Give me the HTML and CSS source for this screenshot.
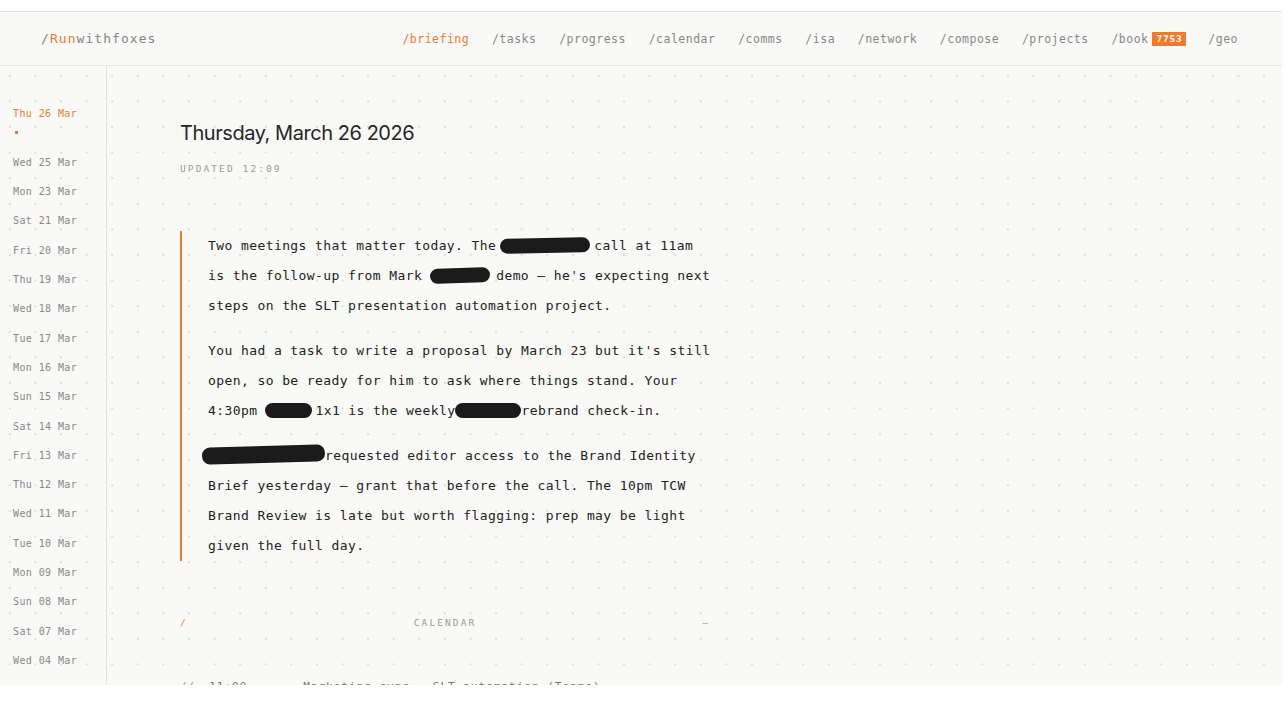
FILE: index.html
```html
<!DOCTYPE html>
<html lang="en">
<head>
  <meta charset="UTF-8">
  <meta name="viewport" content="width=device-width, initial-scale=1.0">
  <title>Runwithfoxes — briefing</title>
  <link rel="stylesheet" href="styles.css">
</head>

<body>
  <div class="app">
    <!-- Barra superiore -->
    <header class="topbar">
      <div class="logo">/<span class="accent">Run</span>withfoxes</div>
      <nav class="nav">
        <a class="active" href="#">/briefing</a>
        <a href="#">/tasks</a>
        <a href="#">/progress</a>
        <a href="#">/calendar</a>
        <a href="#">/comms</a>
        <a href="#">/isa</a>
        <a href="#">/network</a>
        <a href="#">/compose</a>
        <a href="#">/projects</a>
        <a href="#">/book <span class="badge">7753</span></a>
        <a href="#">/geo</a>
      </nav>
    </header>

    <div class="layout">
      <!-- Archivio dei briefing -->
      <aside class="sidebar">
        <ul class="days">
          <li class="day active">Thu 26 Mar</li>
          <li class="day">Wed 25 Mar</li>
          <li class="day">Mon 23 Mar</li>
          <li class="day">Sat 21 Mar</li>
          <li class="day">Fri 20 Mar</li>
          <li class="day">Thu 19 Mar</li>
          <li class="day">Wed 18 Mar</li>
          <li class="day">Tue 17 Mar</li>
          <li class="day">Mon 16 Mar</li>
          <li class="day">Sun 15 Mar</li>
          <li class="day">Sat 14 Mar</li>
          <li class="day">Fri 13 Mar</li>
          <li class="day">Thu 12 Mar</li>
          <li class="day">Wed 11 Mar</li>
          <li class="day">Tue 10 Mar</li>
          <li class="day">Mon 09 Mar</li>
          <li class="day">Sun 08 Mar</li>
          <li class="day">Sat 07 Mar</li>
          <li class="day">Wed 04 Mar</li>
        </ul>
      </aside>

      <!-- Briefing del giorno -->
      <main class="briefing">
        <h1 class="date-title">Thursday, March 26 2026</h1>
        <div class="updated">UPDATED 12:09</div>

        <blockquote class="summary">
          <p>Two meetings that matter today. The<span class="redact r1"></span>call at 11am is the follow-up from Mark<span class="redact r2"></span>demo — he's expecting next steps on the SLT presentation automation project.</p>
          <p>You had a task to write a proposal by March 23 but it's still open, so be ready for him to ask where things stand. Your 4:30pm<span class="redact r3"></span>1x1 is the weekly<span class="redact r4"></span>rebrand check-in.</p>
          <p><span class="redact r5"></span>requested editor access to the Brand Identity Brief yesterday — grant that before the call. The 10pm TCW Brand Review is late but worth flagging: prep may be light given the full day.</p>
        </blockquote>

        <div class="section-head">
          <span class="slash">/</span>
          <span class="section-title">CALENDAR</span>
          <span class="toggle">–</span>
        </div>

        <ul class="events">
          <li class="event"><span class="slash">//</span><span class="time">11:00</span><span class="what">Marketing sync — SLT automation (Teams)</span></li>
        </ul>
      </main>
    </div>
  </div>
</body>
</html>
```

FILE: styles.css
```css
/* Stile generale */
body {
  margin: 0;
  background-color: #fff;
  font-family: "DejaVu Sans Mono", "Liberation Mono", monospace;
  color: #222;
}

.app {
  width: 1282px;
  height: 673px;
  margin-top: 11px;
  border-top: 1px solid #e4e4e0;
  background-color: #f9f9f7;
  display: flex;
  flex-direction: column;
  overflow: hidden;
}

/* Barra superiore */
.topbar {
  height: 53px;
  flex-shrink: 0;
  border-bottom: 1px solid #e6e6e2;
  display: flex;
  align-items: center;
  justify-content: space-between;
  padding: 0 44px 0 41px;
}

.logo {
  font-size: 13px;
  letter-spacing: 1.05px;
  color: #858585;
}

.accent {
  color: #f07b2c;
}

.nav {
  display: flex;
  align-items: center;
  gap: 22.7px;
}

.nav a {
  font-size: 11.5px;
  letter-spacing: 0.5px;
  color: #888;
  text-decoration: none;
  display: flex;
  align-items: center;
}

.nav a.active {
  color: #f07b2c;
}

.badge {
  background-color: #f07b2c;
  color: #fff;
  font-size: 9.5px;
  font-weight: bold;
  letter-spacing: 0.8px;
  padding: 1px 3px 1px 5px;
  margin-left: 3px;
  line-height: 12px;
}

/* Area con griglia a punti */
.layout {
  flex: 1;
  display: flex;
  min-height: 0;
  background-image: radial-gradient(circle, #deded9 0.9px, transparent 1.4px);
  background-size: 25.6px 25.6px;
  background-position: -3px -3px;
}

.sidebar {
  width: 106px;
  flex-shrink: 0;
  border-right: 1px solid #e3e3df;
}

.days {
  list-style: none;
  margin: 0;
  padding: 33px 0 0 13px;
}

.day {
  font-size: 10px;
  letter-spacing: 0.4px;
  line-height: 29.3px;
  color: #888;
}

.day.active {
  color: #f07b2c;
}

.day.active::after {
  content: "";
  display: block;
  width: 3px;
  height: 3px;
  background-color: #f07b2c;
  margin: 3px 0 13.6px 2px;
}

/* Briefing */
.briefing {
  flex: 1;
  padding: 55px 0 0 73px;
}

.date-title {
  margin: 0;
  font-family: Inter, "Liberation Sans", sans-serif;
  font-weight: 400;
  font-size: 20px;
  line-height: 24px;
  letter-spacing: -0.45px;
  color: #262626;
}

.updated {
  margin-top: 18px;
  font-size: 9.5px;
  line-height: 12px;
  letter-spacing: 2.1px;
  color: #999;
}

.summary {
  margin: 56px 0 0 0;
  width: 506px;
  padding-left: 26px;
  border-left: 2px solid #f07b2c;
}

.summary p {
  margin: 0 0 15px 0;
  font-size: 13px;
  letter-spacing: 0.41px;
  line-height: 30px;
  color: #222;
}

.summary p:last-child {
  margin-bottom: 0;
}

/* Testo oscurato */
.redact {
  display: inline-block;
  height: 15px;
  border-radius: 8px;
  background-color: #1b1b1b;
  vertical-align: -3px;
}

.r1 { width: 90px; margin: 0 4px; transform: rotate(-1deg); }
.r2 { width: 60px; margin: 0 6px 0 8px; transform: rotate(-2deg); }
.r3 { width: 47px; margin: 0 3px 0 8px; }
.r4 { width: 66px; }
.r5 { width: 123px; height: 17px; margin-left: -6px; transform: rotate(-1.5deg); }

/* Sezione calendario */
.section-head {
  margin-top: 56px;
  width: 530px;
  display: flex;
  justify-content: space-between;
  font-size: 9.5px;
  line-height: 12px;
  letter-spacing: 2.1px;
  color: #999;
}

.slash {
  color: #f07b2c;
}

.toggle {
  letter-spacing: 0;
  padding-right: 2px;
}

.events {
  list-style: none;
  margin: 51px 0 0 0;
  padding: 0;
}

.event {
  display: flex;
  gap: 14px;
  font-size: 11px;
  line-height: 14px;
  letter-spacing: 1px;
  color: #777;
}

.event .time {
  width: 80px;
}
```
